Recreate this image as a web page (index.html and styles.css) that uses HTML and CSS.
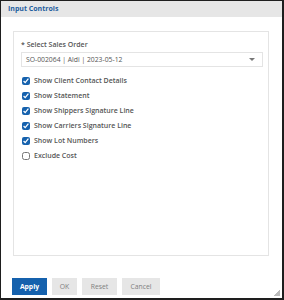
FILE: index.html
```html
<!DOCTYPE html>
<html lang="en">

<head>
    <meta charset="UTF-8">
    <title>Input Controls</title>
    <link rel="stylesheet" href="styles.css">
</head>

<body>
    <div class="dialog">
        <div class="dialog-header">Input Controls</div>

        <div class="dialog-body">
            <div class="panel">
                <label class="field-label">* Select Sales Order</label>
                <div class="select">
                    <span>SO-002064 | Aldi | 2023-05-12</span>
                    <span class="caret"></span>
                </div>

                <div class="options">
                    <label class="option"><input type="checkbox" checked> Show Client Contact Details</label>
                    <label class="option"><input type="checkbox" checked> Show Statement</label>
                    <label class="option"><input type="checkbox" checked> Show Shippers Signature Line</label>
                    <label class="option"><input type="checkbox" checked> Show Carriers Signature Line</label>
                    <label class="option"><input type="checkbox" checked> Show Lot Numbers</label>
                    <label class="option"><input type="checkbox"> Exclude Cost</label>
                </div>
            </div>
        </div>

        <div class="dialog-footer">
            <button class="btn btn-primary">Apply</button>
            <button class="btn btn-ok">OK</button>
            <button class="btn btn-reset">Reset</button>
            <button class="btn btn-cancel">Cancel</button>
            <span class="grip"></span>
        </div>
    </div>
</body>

</html>
```

FILE: styles.css
```css
:root {
    --frame: #1e1e1e;
    --header-bg: #e6e6e6;
    --title: #1f5f9e;
    --line: #e4e4e4;
    --text: #555555;
    --primary: #1561ad;
    --btn: #e6e6e6;
    --btn-text: #808080;
}

html,
body {
    margin: 0;
    height: 100%;
}

body {
    font-family: 'Open Sans', 'DejaVu Sans', sans-serif;
    color: var(--text);
    background: #fff;
}

.dialog {
    box-sizing: border-box;
    height: 300px;
    border: 1px solid var(--frame);
    border-right-width: 2px;
    border-bottom-width: 2px;
    display: flex;
    flex-direction: column;
    position: relative;
}

.dialog-header {
    height: 16px;
    line-height: 15px;
    padding-left: 7px;
    background: var(--header-bg);
    color: var(--title);
    font-size: 7px;
    font-weight: 700;
}

.dialog-body {
    flex-grow: 1;
    padding: 14px 13px 0 12px;
    display: flex;
}

.panel {
    flex-grow: 1;
    border: 1px solid var(--line);
    padding: 8px 5px 0 7px;
    height: 225px;
    box-sizing: border-box;
}

.field-label {
    display: block;
    font-size: 7px;
    font-weight: 600;
    line-height: 10px;
    margin-bottom: 2px;
}

.select {
    height: 15px;
    border: 1px solid var(--line);
    box-sizing: border-box;
    display: flex;
    align-items: center;
    justify-content: space-between;
    padding: 0 7px 0 4px;
    font-size: 6.8px;
}

.caret {
    width: 0;
    height: 0;
    border-left: 3px solid transparent;
    border-right: 3px solid transparent;
    border-top: 3px solid #777;
}

.options {
    display: flex;
    flex-direction: column;
    margin-top: 6px;
}

.option {
    display: flex;
    align-items: center;
    height: 15px;
    font-size: 7px;
    font-weight: 600;
}

.option input {
    width: 8px;
    height: 8px;
    margin: 0 4px 0 1px;
    accent-color: var(--primary);
}

.dialog-footer {
    display: flex;
    gap: 5px;
    padding: 0 11px;
    height: 20px;
    align-items: flex-start;
}

.btn {
    height: 17px;
    border: none;
    background: var(--btn);
    color: var(--btn-text);
    font-family: inherit;
    font-size: 6.8px;
    padding: 0;
}

.btn-primary {
    background: var(--primary);
    color: #fff;
    font-weight: 700;
    width: 35px;
}

.btn-ok {
    width: 25px;
}

.btn-reset {
    width: 35px;
}

.btn-cancel {
    width: 38px;
}

.grip {
    position: absolute;
    right: 2px;
    bottom: 2px;
    width: 6px;
    height: 6px;
    background: linear-gradient(135deg, transparent 50%, #bbb 50%);
}
```
